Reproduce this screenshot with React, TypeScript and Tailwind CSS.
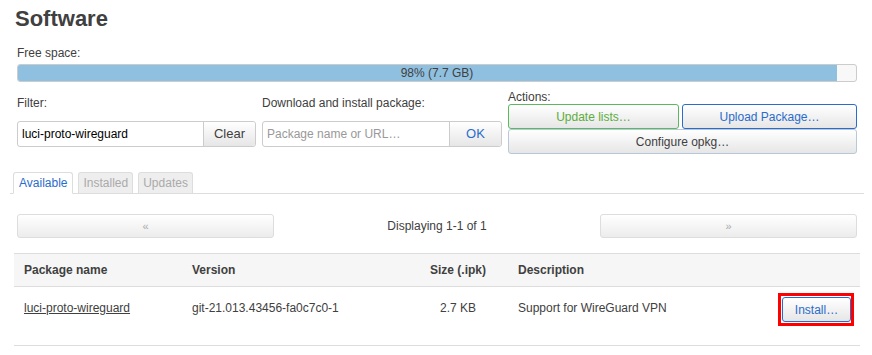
const btn =
  'rounded-[3px] border bg-gradient-to-b from-white to-[#e6e6e6] text-[12px] leading-none';

export default function App() {
  return (
    <main className="h-[355px] w-[872px] overflow-hidden bg-white pl-[10px] pr-[8px] pt-[6px] font-['Liberation_Sans',Arial,sans-serif] text-[12px] text-[#404040]">
      <h2 className="ml-[5px] text-[22px] font-bold leading-[26px] text-[#404040]">Software</h2>

      <div className="px-[7px]">
        <p className="mt-[13px] leading-[16px]">Free space:</p>
        <div className="relative mt-[3px] h-[18px] overflow-hidden rounded-[3px] border border-[#ccc] bg-[#f8f8f8]">
          <div className="h-full w-[97.7%] bg-[#90c0e0]" />
          <span className="absolute inset-0 flex items-center justify-center text-[12px] text-[#404040]">98% (7.7 GB)</span>
        </div>

        <div className="mt-[8px] flex gap-[6px]">
          <div className="w-[239px]">
            <p className="mt-[6px] leading-[14px]">Filter:</p>
            <div className="mt-[11px] flex h-[26px] rounded-[3px] border border-[#ccc]">
              <div className="flex flex-1 items-center px-[4px] text-[12px] text-black">luci-proto-wireguard</div>
              <button className="w-[52px] rounded-r-[3px] border-l border-[#ccc] bg-gradient-to-b from-white to-[#e6e6e6] text-[13px] text-[#404040]">
                Clear
              </button>
            </div>
          </div>
          <div className="w-[240px]">
            <p className="mt-[6px] leading-[14px]">Download and install package:</p>
            <div className="mt-[11px] flex h-[26px] rounded-[3px] border border-[#ccc]">
              <div className="flex flex-1 items-center px-[4px] text-[12px] text-[#999]">Package name or URL…</div>
              <button className="w-[52px] rounded-r-[3px] border-l border-[#ccc] bg-gradient-to-b from-white to-[#e6e6e6] text-[13px] text-[#2a6ccc]">
                OK
              </button>
            </div>
          </div>
          <div className="flex-1">
            <p className="leading-[14px]">Actions:</p>
            <div className="flex gap-[3px]">
              <button className={`${btn} h-[25px] w-[171px] border-[#5cb85c] text-[#5cad3c]`}>Update lists…</button>
              <button className={`${btn} h-[25px] flex-1 border-[#2a6ccc] text-[#2a6ccc]`}>Upload Package…</button>
            </div>
            <button className={`${btn} h-[25px] w-full border-[#b8c8d8] text-[#404040]`}>Configure opkg…</button>
          </div>
        </div>
      </div>

      <div className="mt-[18px] flex h-[22px] items-end gap-[5px] border-b border-[#ddd] pl-[3px]">
        <div className="-mb-px flex h-[22px] items-center rounded-t-[3px] border border-b-white border-[#ddd] bg-white px-[5px] text-[12px] text-[#2a6ccc]">
          Available
        </div>
        <div className="flex h-[21px] items-center rounded-t-[3px] border border-b-0 border-[#ddd] bg-[#eee] px-[4px] text-[12px] text-[#aaa]">
          Installed
        </div>
        <div className="flex h-[21px] items-center rounded-t-[3px] border border-b-0 border-[#ddd] bg-[#eee] px-[4px] text-[12px] text-[#aaa]">
          Updates
        </div>
      </div>

      <div className="mt-[20px] flex items-center px-[7px]">
        <button className="h-[24px] w-[257px] rounded-[3px] border border-[#ddd] bg-gradient-to-b from-white to-[#ececec] text-[11px] text-[#aaa]">«</button>
        <span className="flex-1 text-center">Displaying 1-1 of 1</span>
        <button className="h-[24px] w-[257px] rounded-[3px] border border-[#ddd] bg-gradient-to-b from-white to-[#ececec] text-[11px] text-[#aaa]">»</button>
      </div>

      <div className="mx-[4px] mt-[15px] border-b border-[#ddd]">
        <div className="grid h-[33px] grid-cols-[168px_226px_100px_262px_1fr] items-center border-t border-[#ddd] bg-[#f6f6f6] font-bold">
          <div className="px-[10px]">Package name</div>
          <div className="px-[10px]">Version</div>
          <div className="text-center">Size (.ipk)</div>
          <div className="px-[10px]">Description</div>
          <div />
        </div>
        <div className="grid h-[59px] grid-cols-[168px_226px_100px_262px_1fr] items-start border-t border-[#ddd] leading-[14px]">
          <div className="px-[10px] pt-[14px]">
            <a className="underline">luci-proto-wireguard</a>
          </div>
          <div className="px-[10px] pt-[14px]">git-21.013.43456-fa0c7c0-1</div>
          <div className="pt-[14px] text-center">2.7 KB</div>
          <div className="px-[10px] pt-[14px]">Support for WireGuard VPN</div>
          <div className="flex justify-end pr-[6px] pt-[6px]">
            <div className="border-[3px] border-[#f00] p-[1px] pr-0">
              <button className={`${btn} block h-[25px] w-[69px] border-[#2a6ccc] text-[#2a6ccc]`}>Install…</button>
            </div>
          </div>
        </div>
      </div>
    </main>
  );
}
